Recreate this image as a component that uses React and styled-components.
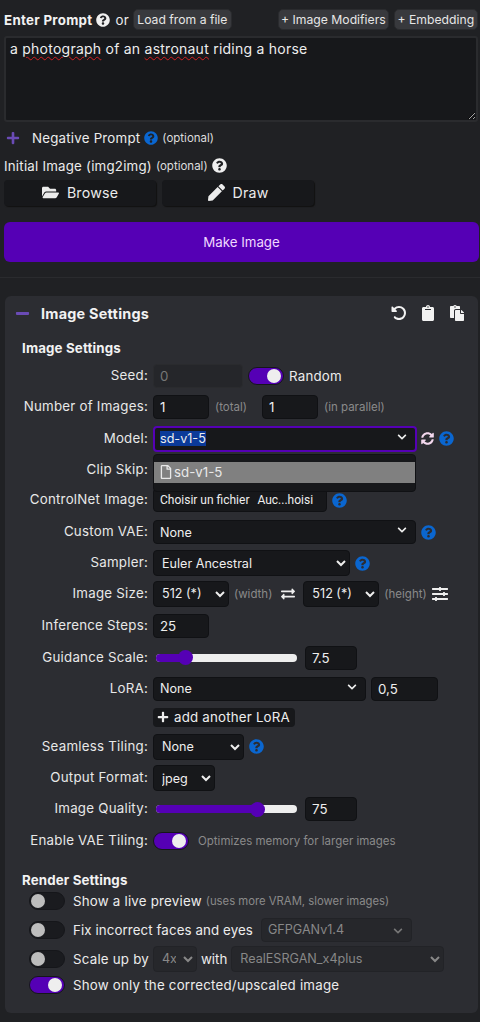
import React from 'react';
import styled, { createGlobalStyle } from 'styled-components';
import { FaFolderOpen, FaPen, FaPlus, FaMinus, FaQuestionCircle, FaPaste, FaClipboard, FaSyncAlt, FaExchangeAlt, FaSlidersH, FaRegFile, FaChevronDown } from 'react-icons/fa';
import { FaRotateLeft } from 'react-icons/fa6';

const Global = createGlobalStyle`
  html, body { margin: 0; padding: 0; background: #202124; color-scheme: dark; }
  body { font-family: Inter, "Noto Sans", sans-serif; font-size: 13.3px; color: #eee; }
  * { box-sizing: border-box; }
`;

const Page = styled.div`
  width: 480px; height: 1022px; overflow: hidden; background: #202124; padding-top: 9px; display: flex; flex-direction: column;
`;
const PromptBar = styled.div`
  display: flex; align-items: center; height: 21px; padding-left: 4px; gap: 4px; white-space: nowrap;
`;
const Strong = styled.b`font-weight: 700; font-size: 13.3px; letter-spacing: .3px; color: #f2f2f2; flex: none;`;
const Small = styled.span`font-size: 11.5px; color: #ddd; margin-left: ${p => p.$ml || 0}px;`;
const Plain = styled.span`font-size: 13.3px; letter-spacing: ${p => p.$ls ?? .22}px; color: #ececec; margin-left: ${p => p.$ml || 0}px;`;
const ChipButton = styled.button`
  width: ${p => p.$w}px; height: 21px; padding: 0; background: #38393d; border: 1px solid #2a2b2e; border-radius: 5px;
  color: #e6e6e6; font: 400 12.2px Inter, sans-serif; white-space: nowrap; margin-left: ${p => p.$ml || 0}px; flex: none;
`;
const PromptBox = styled.div`
  margin: 6px 2px 0 4px; height: 86px; background: #17181b; border: 2px solid #2a2b2e; border-radius: 3px;
  padding: 2px 4px; font-size: 14px; letter-spacing: .24px; line-height: 18px; color: #eee; resize: vertical; overflow: auto;
`;
const Misspelt = styled.span`text-decoration: underline wavy #d32020; text-decoration-thickness: 1px; text-underline-offset: 2px;`;
const NegRow = styled.div`
  display: flex; align-items: center; height: 26px; margin-top: 3px; padding-left: 6px;
`;
const PlusIcon = styled(FaPlus)`color: #6a4bb5; width: 14px; height: 14px; margin-right: 12px;`;
const InitRow = styled.div`
  display: flex; align-items: center; gap: 4px; height: 29px; padding-left: 4px;
`;
const ImgButtons = styled.div`display: flex; gap: 6px; padding-left: 4px;`;
const ImgButton = styled.button`
  width: 152px; height: 26px; background: #17181b; border: none; border-radius: 4px; box-shadow: 1px 1px 1px #111;
  color: #ececec; font: 400 14.2px Inter, sans-serif; letter-spacing: .2px; display: flex; align-items: center; justify-content: center; gap: 8px; padding: 0 0 2px;
  svg { width: 17px; height: 17px; }
`;
const MakeButton = styled.button`
  margin: 16px 0 0 4px; width: 475px; height: 40px; background: #5500b5; border: none; border-radius: 6px;
  color: #f0d8ff; font: 400 13.3px Inter, sans-serif;
`;
const Divider = styled.hr`margin: 15px 0 0; border: 0; border-top: 1px solid #2a2b2e;`;
const Panel = styled.section`
  margin: 18px 2px 0 5px; height: 717px; background: #2c2d32; border-radius: 6px; position: relative;
`;
const PanelHead = styled.div`
  display: flex; align-items: center; height: 34px; padding: 0 13px 0 10px;
`;
const Dash = styled(FaMinus)`color: #6a4bb5; width: 15px; height: 15px; margin-right: 11px;`;
const PanelTitle = styled.b`font-size: 14.4px; letter-spacing: .25px; font-weight: 700; color: #f2f2f2; flex: 1;`;
const HeadIcons = styled.div`
  display: flex; gap: 13px; align-items: center; color: #f2f2f2; svg { width: 16px; height: 16px; }
`;
const Section = styled.h4`
  margin: 0; padding: ${p => p.$pt}px 0 0 17px; height: ${p => p.$h}px; display: flex; align-items: center; font-size: 13.3px; letter-spacing: .15px; font-weight: 700; color: #f2f2f2;
`;
const Row = styled.div`
  display: grid; grid-template-columns: 143px 1fr; column-gap: 5px; height: ${p => p.$h}px; align-items: center;
`;
const Label = styled.label`text-align: right; font-size: 13.3px; letter-spacing: .24px; color: #e8e8e8; white-space: nowrap; margin-top: -2px;`;
const Controls = styled.div`display: flex; align-items: center; gap: ${p => p.$gap ?? 5}px; position: relative;`;
const TextInput = styled.input`
  width: ${p => p.$w}px; height: 24px; background: ${p => p.disabled ? '#25262a' : '#17181b'}; border: 1px solid ${p => p.disabled ? '#2a2b2e' : '#101114'};
  border-radius: 4px; color: ${p => p.disabled ? '#777' : '#eee'}; font: 400 13.3px Inter, sans-serif; padding: 0 6px; outline: none; margin-left: ${p => p.$ml || 0}px;
`;
const NativeSelect = styled.select`
  width: ${p => p.$w}px; height: 26px; background-color: ${p => p.disabled ? '#26272b' : '#17181b'}; border: 1px solid ${p => p.disabled ? '#222327' : '#101114'}; border-radius: 4px;
  color: ${p => p.disabled ? '#888' : '#eee'}; font: 400 12.6px Inter, sans-serif; padding: 0 4px; outline: none; opacity: 1; margin-left: ${p => p.$ml || 0}px; flex: none;
`;
const FakeSelect = styled.div`
  width: ${p => p.$w}px; height: ${p => p.$h || 24}px; background: ${p => p.$dim ? '#26272b' : '#17181b'}; border: ${p => p.$focus ? '2px solid #5500b5' : p.$dim ? '1px solid #222327' : '1px solid #101114'};
  border-radius: 4px; display: flex; align-items: center; justify-content: space-between; padding: 0 8px 0 ${p => p.$focus ? 5 : 6}px; font-size: 12.6px; color: ${p => p.$dim ? '#888' : '#eee'}; flex: none; margin-left: ${p => p.$ml || 0}px;
`;
const Chevron = styled(FaChevronDown)`width: 10px; height: 10px; margin-top: ${p => p.$dim ? 2 : -4}px; color: ${p => p.$dim ? '#777' : '#eee'};`;
const Selected = styled.span`background: #0b3a99; color: #eee;`;
const Note = styled.span`font-size: ${p => p.$fs || 11.5}px; color: #8a8a8a; white-space: nowrap; margin-left: ${p => p.$ml || 0}px;`;
const Help = styled(FaQuestionCircle)`width: ${p => p.$s || 15}px; height: ${p => p.$s || 15}px; color: ${p => p.$white ? '#f0f0f0' : '#0a66d0'}; flex: none; margin-left: ${p => p.$ml || 0}px;`;
const ToggleTrack = styled.span`
  display: inline-block; position: relative; width: 36px; height: 18px; border-radius: 9px; border: 1px solid #15161a; flex: none;
  background: ${p => p.$on ? '#5500b5' : '#1a1b1f'};
`;
const Knob = styled.span`
  position: absolute; top: 1px; ${p => p.$on ? 'right: 2px;' : 'left: 1px;'} width: 14px; height: 14px; border-radius: 50%; background: ${p => p.$on ? '#eeeeee' : '#bdbdbd'};
`;
const Toggle = ({ on }) => <ToggleTrack $on={on}><Knob $on={on} /></ToggleTrack>;
const Dropdown = styled.div`
  position: absolute; left: 0; top: 28px; width: 263px; height: 38px; background: #17181b; border: 1px solid #101114; border-radius: 4px; padding-top: 7px; z-index: 3;
`;
const DropItem = styled.div`
  height: 21px; background: #808080; color: #e8e8e8; display: flex; align-items: center; gap: 2px; padding-left: 6px; font-size: 13.3px;
  svg { width: 12px; height: 14px; }
`;
const FileBox = styled.div`
  width: 174px; height: 24px; background: #17181b; border: 1px solid #101114; border-radius: 4px; display: flex; align-items: center; padding-left: 6px;
  font: 400 12px Roboto, sans-serif; color: #eee; gap: 8px; white-space: nowrap;
`;
const Slider = styled.div`
  width: 141px; height: 8px; margin-left: 3px; border-radius: 4px; background: #eee; position: relative; flex: none; margin-right: 3px;
`;
const SliderFill = styled.div`position: absolute; left: 0; top: 0; bottom: 0; border-radius: 4px; background: #5500b5;`;
const SliderThumb = styled.div`position: absolute; top: -3.5px; width: 15px; height: 15px; border-radius: 50%; background: #5500b5; margin-left: -7.5px;`;
const AddButton = styled.button`
  height: 19px; width: 142px; padding: 0 4px; background: #17181b; border: none; border-radius: 4px; color: #eee; font: 400 13.3px Inter, sans-serif; letter-spacing: .2px;
  display: flex; align-items: center; gap: 5px; white-space: nowrap; svg { width: 12px; height: 12px; flex: none; }
`;
const RenderRow = styled.div`
  display: flex; align-items: center; gap: 8px; padding-left: 24px; height: ${p => p.$h}px; white-space: nowrap;
`;
const IconBtn = styled.span`display: inline-flex; color: ${p => p.$c || '#eee'}; margin-left: ${p => p.$ml || 0}px; svg { width: ${p => p.$s || 14}px; height: ${p => p.$s || 14}px; }`;

export default function App() {
  return (
    <Page>
      <Global />
      <PromptBar>
        <Strong>Enter Prompt</Strong>
        <Help $white $s={14} />
        <Plain $ml={1}>or</Plain>
        <ChipButton $w={99}>Load from a file</ChipButton>
        <ChipButton $w={111} $ml={42}>+ Image Modifiers</ChipButton>
        <ChipButton $w={84} $ml={1}>+ Embedding</ChipButton>
      </PromptBar>
      <PromptBox>a <Misspelt>photograph</Misspelt> of an <Misspelt>astronaut</Misspelt> riding a horse</PromptBox>
      <NegRow>
        <PlusIcon />
        <Plain>Negative Prompt</Plain>
        <Help $ml={4} $s={14} />
        <Small $ml={4}>(optional)</Small>
      </NegRow>
      <InitRow>
        <Plain>Initial Image (img2img)</Plain>
        <Small>(optional)</Small>
        <Help $white />
      </InitRow>
      <ImgButtons>
        <ImgButton><FaFolderOpen /> Browse</ImgButton>
        <ImgButton><FaPen /> Draw</ImgButton>
      </ImgButtons>
      <MakeButton>Make Image</MakeButton>
      <Divider />
      <Panel>
        <PanelHead>
          <Dash />
          <PanelTitle>Image Settings</PanelTitle>
          <HeadIcons><FaRotateLeft /><FaClipboard /><FaPaste /></HeadIcons>
        </PanelHead>
        <Section $h={30} $pt={6}>Image Settings</Section>
        <Row $h={31}><Label>Seed:</Label><Controls>
          <TextInput $w={90} disabled value="0" readOnly />
          <Toggle on /><Plain>Random</Plain>
        </Controls></Row>
        <Row $h={31}><Label>Number of Images:</Label><Controls>
          <TextInput $w={56} value="1" readOnly /><Note $ml={1}>(total)</Note>
          <TextInput $w={56} $ml={10} value="1" readOnly /><Note $ml={1}>(in parallel)</Note>
        </Controls></Row>
        <Row $h={33}><Label>Model:</Label><Controls $gap={4}>
          <FakeSelect $w={264} $h={26} $focus><Selected>sd-v1-5</Selected><Chevron /></FakeSelect>
          <IconBtn $c="#f4d8ee" $s={13}><FaSyncAlt /></IconBtn>
          <Help $ml={1} />
          <Dropdown><DropItem><FaRegFile /> sd-v1-5</DropItem></Dropdown>
        </Controls></Row>
        <Row $h={29}><Label>Clip Skip:</Label><Controls /></Row>
        <Row $h={32}><Label>ControlNet Image:</Label><Controls>
          <FileBox><span>Choisir un fichier</span><span>Auc...hoisi</span></FileBox>
          <Help />
        </Controls></Row>
        <Row $h={32}><Label>Custom VAE:</Label><Controls>
          <FakeSelect $w={263}>None<Chevron /></FakeSelect><Help />
        </Controls></Row>
        <Row $h={30}><Label>Sampler:</Label><Controls><NativeSelect $w={197}><option>Euler Ancestral</option></NativeSelect><Help /></Controls></Row>
        <Row $h={31}><Label>Image Size:</Label><Controls>
          <NativeSelect $w={76}><option>512 (*)</option></NativeSelect><Note>(width)</Note>
          <IconBtn $ml={4} $s={14}><FaExchangeAlt /></IconBtn>
          <NativeSelect $w={76} $ml={3}><option>512 (*)</option></NativeSelect><Note>(height)</Note>
          <IconBtn $s={16}><FaSlidersH /></IconBtn>
        </Controls></Row>
        <Row $h={33}><Label>Inference Steps:</Label><Controls><TextInput $w={56} value="25" readOnly /></Controls></Row>
        <Row $h={31}><Label>Guidance Scale:</Label><Controls>
          <Slider><SliderFill style={{ width: '21%' }} /><SliderThumb style={{ left: '21%' }} /></Slider>
          <TextInput $w={52} value="7.5" readOnly />
        </Controls></Row>
        <Row $h={31}><Label>LoRA:</Label><Controls>
          <FakeSelect $w={213}>None<Chevron /></FakeSelect>
          <TextInput $w={67} value="0,5" readOnly />
        </Controls></Row>
        <Row $h={26}><span /><Controls><AddButton><FaPlus /> add another LoRA</AddButton></Controls></Row>
        <Row $h={33}><Label>Seamless Tiling:</Label><Controls><NativeSelect $w={91}><option>None</option></NativeSelect><Help /></Controls></Row>
        <Row $h={30}><Label>Output Format:</Label><Controls><NativeSelect $w={62}><option>jpeg</option></NativeSelect></Controls></Row>
        <Row $h={32}><Label>Image Quality:</Label><Controls>
          <Slider><SliderFill style={{ width: '72%' }} /><SliderThumb style={{ left: '72%' }} /></Slider>
          <TextInput $w={52} value="75" readOnly />
        </Controls></Row>
        <Row $h={32}><Label>Enable VAE Tiling:</Label><Controls $gap={9}><Toggle on /><Note>Optimizes memory for larger images</Note></Controls></Row>
        <Section $h={29} $pt={16}>Render Settings</Section>
        <RenderRow $h={29}><Toggle /><Plain>Show a live preview</Plain><Note $ml={-4} $fs={11.3}>(uses more VRAM, slower images)</Note></RenderRow>
        <RenderRow $h={29}><Toggle /><Plain $ls={.1}>Fix incorrect faces and eyes</Plain>
          <FakeSelect $w={151} $dim>GFPGANv1.4<Chevron $dim /></FakeSelect></RenderRow>
        <RenderRow $h={29}><Toggle /><Plain>Scale up by</Plain>
          <NativeSelect $w={44} disabled $ml={-4}><option>4x</option></NativeSelect><Plain $ml={-4} $ls={0}>with</Plain>
          <NativeSelect $w={213} disabled $ml={-4}><option>RealESRGAN_x4plus</option></NativeSelect></RenderRow>
        <RenderRow $h={24}><Toggle on /><Plain>Show only the corrected/upscaled image</Plain></RenderRow>
      </Panel>
    </Page>
  );
}
